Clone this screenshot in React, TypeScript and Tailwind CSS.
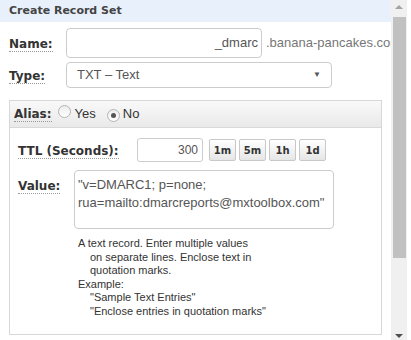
import React from "react";

const label = "font-['DejaVu_Sans',Verdana,sans-serif] font-bold text-[12px] text-[#333] border-b border-dotted border-[#999] leading-[14px]";

function Radio({ checked }: { checked?: boolean }) {
  return (
    <span className="inline-flex h-[13px] w-[13px] items-center justify-center rounded-full border border-[#b5b5b5] bg-gradient-to-b from-[#ececec] to-white">
      {checked && <span className="h-[5px] w-[5px] rounded-full bg-[#555]" />}
    </span>
  );
}

function TtlButton({ text }: { text: string }) {
  return (
    <button className="h-[22px] w-[27px] rounded-[2px] border border-[#c8c8c8] bg-gradient-to-b from-white to-[#e6e6e6] font-['DejaVu_Sans',Verdana,sans-serif] text-[10px] font-bold text-[#333]">
      {text}
    </button>
  );
}

export default function App() {
  return (
    <div className="flex h-[340px] w-[411px] overflow-hidden bg-white font-['Liberation_Sans',Arial,sans-serif]">
      <div className="flex w-[391px] flex-col overflow-hidden">
        <div className="flex h-[22px] shrink-0 items-center bg-[#e8f0fc] pl-[9px] font-['DejaVu_Sans',Verdana,sans-serif] text-[11px] font-bold text-[#444]">
          Create Record Set
        </div>

        <div className="mt-[6px] flex items-center whitespace-nowrap">
          <div className="w-[66px] shrink-0 pl-[9px]">
            <span className={label}>Name:</span>
          </div>
          <div className="flex h-[30px] w-[196px] shrink-0 items-center justify-end rounded-[4px] border border-[#ccc] pr-[3px] text-[13px] text-[#555]">
            _dmarc
          </div>
          <span className="ml-[4px] shrink-0 text-[13px] text-[#777]">.banana-pancakes.com</span>
        </div>

        <div className="mt-[4px] flex items-center">
          <div className="w-[66px] shrink-0 pl-[9px]">
            <span className={label}>Type:</span>
          </div>
          <div className="flex h-[26px] w-[266px] shrink-0 items-center justify-between rounded-[4px] border border-[#ccc] pl-[10px] pr-[10px] text-[13px] text-[#555]">
            <span>TXT – Text</span>
            <span className="text-[8px] text-[#555]">▼</span>
          </div>
        </div>

        <div className="ml-[9px] mt-[12px] w-[373px] border border-[#d8d8d8]">
          <div className="flex h-[27px] items-center border-b border-[#d8d8d8] bg-gradient-to-b from-[#f9f9f9] to-[#e9e9e9] pl-[4px] text-[13px] text-[#333]">
            <span className={label}>Alias:</span>
            <span className="ml-[6px]"><Radio /></span>
            <span className="ml-[4px]">Yes</span>
            <span className="ml-[11px]"><Radio checked /></span>
            <span className="ml-[3px]">No</span>
          </div>

          <div className="mt-[10px] flex items-center">
            <div className="w-[127px] shrink-0 pl-[8px]">
              <span className={label}>TTL (Seconds):</span>
            </div>
            <div className="flex h-[24px] w-[66px] items-center justify-end rounded-[3px] border border-[#ccc] pr-[4px] text-[12px] text-[#555]">
              300
            </div>
            <div className="ml-[6px] flex gap-[3px]">
              <TtlButton text="1m" />
              <TtlButton text="5m" />
              <TtlButton text="1h" />
              <TtlButton text="1d" />
            </div>
          </div>

          <div className="mt-[8px] flex">
            <div className="w-[64px] shrink-0 pl-[8px] pt-[3px]">
              <span className={label}>Value:</span>
            </div>
            <div className="flex flex-col">
              <div className="h-[59px] w-[260px] rounded-[4px] border border-[#ccc] px-[3px] pt-[5px] text-[13px] leading-[18px] text-[#555]">
                "v=DMARC1; p=none;
                <br />
                rua=mailto:dmarcreports@mxtoolbox.com"
              </div>
              <div className="mt-[8px] pb-[15px] pl-[4px] text-[11px] leading-[13.6px] text-[#333]">
                <div>A text record. Enter multiple values</div>
                <div className="pl-[12px]">on separate lines. Enclose text in</div>
                <div className="pl-[12px]">quotation marks.</div>
                <div>Example:</div>
                <div className="pl-[12px]">"Sample Text Entries"</div>
                <div className="pl-[12px]">"Enclose entries in quotation marks"</div>
              </div>
            </div>
          </div>
        </div>
      </div>

      <div className="flex w-[16px] flex-col items-center bg-[#f0f0f0]">
        <span className="mt-[5px] h-0 w-0 border-x-[4px] border-b-[4px] border-x-transparent border-b-[#a3a3a3]" />
        <div className="mt-[8px] h-[241px] w-[13px] bg-[#c1c1c1]" />
        <div className="flex-1" />
        <span className="mb-[2px] h-0 w-0 border-x-[4px] border-t-[4px] border-x-transparent border-t-[#505050]" />
      </div>
      <div className="w-[4px] bg-white" />
    </div>
  );
}
